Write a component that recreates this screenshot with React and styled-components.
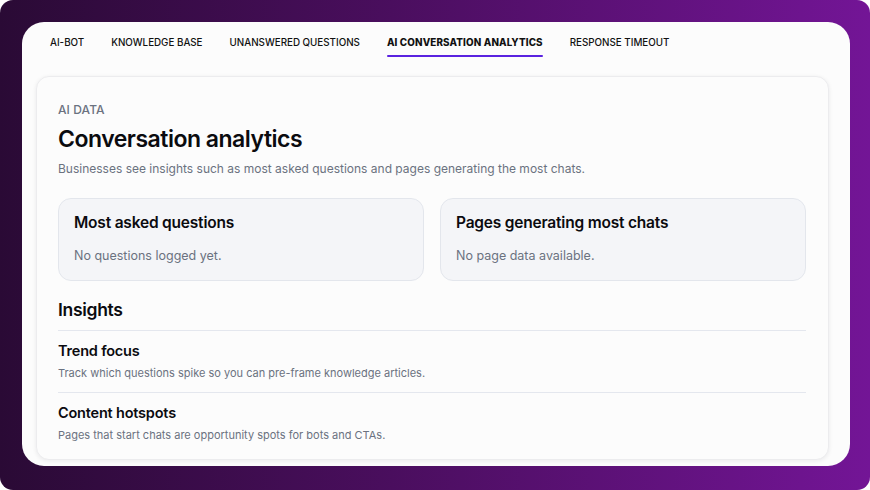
import React from 'react';
import styled, { createGlobalStyle } from 'styled-components';

const GlobalStyle = createGlobalStyle`
  html, body {
    margin: 0;
    padding: 0;
    background: #ffffff;
  }
  body {
    font-family: Inter, "Noto Sans", "Liberation Sans", sans-serif;
    -webkit-font-smoothing: antialiased;
  }
  * {
    box-sizing: border-box;
  }
`;

const Frame = styled.div`
  width: 870px;
  height: 490px;
  border-radius: 13px;
  padding: 22px 20px 24px 22px;
  background: linear-gradient(90deg, #2a0a35 0%, #4a0e5e 45%, #731596 100%);
  overflow: hidden;
`;

const Panel = styled.div`
  height: 444px;
  background: #fcfcfc;
  border-radius: 22px;
  padding: 0 21px 6px 14px;
  display: flex;
  flex-direction: column;
  overflow: hidden;
`;

const Tabs = styled.nav`
  display: flex;
  gap: 27px;
  padding: 0 0 0 14px;
  height: 40px;
`;

const Tab = styled.div`
  position: relative;
  display: flex;
  align-items: center;
  padding-top: 1px;
  font-size: 9.8px;
  font-weight: ${p => (p.$active ? 800 : 500)};
  letter-spacing: ${p => (p.$active ? '0.15px' : '0')};
  color: #111111;
  white-space: nowrap;

  &::after {
    content: '';
    display: ${p => (p.$active ? 'block' : 'none')};
    position: absolute;
    left: 0;
    right: 0;
    bottom: 5px;
    height: 2px;
    border-radius: 1px;
    background: #5a22e0;
  }
`;

const Card = styled.section`
  margin-top: 14px;
  flex: 1;
  background: #fcfcfc;
  border: 1px solid #ececee;
  border-radius: 13px;
  box-shadow: 0 1px 4px rgba(20, 20, 40, 0.08);
  padding: 25px 22px 0 21px;
`;

const Eyebrow = styled.div`
  font-size: 12px;
  font-weight: 500;
  color: #6b7280;
  letter-spacing: 0.1px;
`;

const Title = styled.h1`
  margin: 8px 0 0;
  font-size: 23px;
  font-weight: 600;
  letter-spacing: -0.5px;
  color: #0b0b0f;
`;

const Lead = styled.p`
  margin: 8px 0 0;
  font-size: 12px;
  color: #6b7280;
`;

const Tiles = styled.div`
  display: grid;
  grid-template-columns: 1fr 1fr;
  gap: 16px;
  margin-top: 22px;
`;

const Tile = styled.div`
  height: 83px;
  background: #f4f5f8;
  border: 1px solid #e3e6ec;
  border-radius: 13px;
  padding: 14px 15px;
`;

const TileTitle = styled.h3`
  margin: 0;
  font-size: 15.5px;
  font-weight: 600;
  letter-spacing: -0.2px;
  color: #0b0b0f;
`;

const TileText = styled.p`
  margin: 16px 0 0;
  font-size: 12.5px;
  color: #6b7280;
`;

const SectionTitle = styled.h2`
  margin: 18px 0 0;
  padding-bottom: 10px;
  font-size: 17.5px;
  font-weight: 600;
  letter-spacing: -0.3px;
  color: #0b0b0f;
  border-bottom: 1px solid #e4e7ee;
`;

const Insight = styled.div`
  padding: 11px 0 12px;
  border-bottom: ${p => (p.$last ? 'none' : '1px solid #e4e7ee')};
`;

const InsightTitle = styled.h4`
  margin: 0;
  font-size: 14.5px;
  font-weight: 600;
  letter-spacing: -0.2px;
  color: #0b0b0f;
`;

const InsightText = styled.p`
  margin: 7px 0 0;
  font-size: 11px;
  color: #6b7280;
`;

const tabs = [
  { label: 'AI-BOT' },
  { label: 'KNOWLEDGE BASE' },
  { label: 'UNANSWERED QUESTIONS' },
  { label: 'AI CONVERSATION ANALYTICS', active: true },
  { label: 'RESPONSE TIMEOUT' },
];

const insights = [
  {
    title: 'Trend focus',
    text: 'Track which questions spike so you can pre-frame knowledge articles.',
  },
  {
    title: 'Content hotspots',
    text: 'Pages that start chats are opportunity spots for bots and CTAs.',
  },
];

const App = () => (
  <>
    <GlobalStyle />
    <Frame>
      <Panel>
        <Tabs>
          {tabs.map(t => (
            <Tab key={t.label} $active={t.active}>
              {t.label}
            </Tab>
          ))}
        </Tabs>

        <Card>
          <Eyebrow>AI DATA</Eyebrow>
          <Title>Conversation analytics</Title>
          <Lead>
            Businesses see insights such as most asked questions and pages generating the most chats.
          </Lead>

          <Tiles>
            <Tile>
              <TileTitle>Most asked questions</TileTitle>
              <TileText>No questions logged yet.</TileText>
            </Tile>
            <Tile>
              <TileTitle>Pages generating most chats</TileTitle>
              <TileText>No page data available.</TileText>
            </Tile>
          </Tiles>

          <SectionTitle>Insights</SectionTitle>
          {insights.map((item, i) => (
            <Insight key={item.title} $last={i === insights.length - 1}>
              <InsightTitle>{item.title}</InsightTitle>
              <InsightText>{item.text}</InsightText>
            </Insight>
          ))}
        </Card>
      </Panel>
    </Frame>
  </>
);

export default App;
